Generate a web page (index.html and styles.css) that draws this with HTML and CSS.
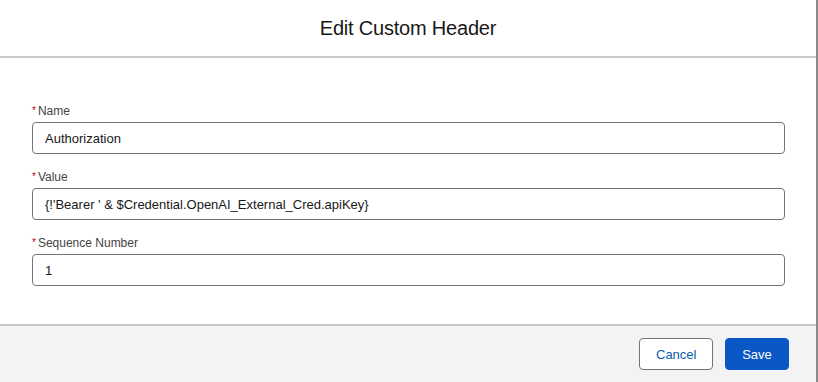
FILE: index.html
```html
<!DOCTYPE html>
<html lang="en">
<head>
    <meta charset="UTF-8">
    <meta name="viewport" content="width=device-width, initial-scale=1.0">
    <title>Edit Custom Header</title>
    <link rel="stylesheet" href="styles.css">
</head>
<body>
    <div class="modal">
        <div class="modal-header">
            <h2>Edit Custom Header</h2>
        </div>
        <div class="modal-body">
            <div class="form-group">
                <label for="name"><abbr>*</abbr>Name</label>
                <input type="text" id="name" value="Authorization">
            </div>
            <div class="form-group">
                <label for="value"><abbr>*</abbr>Value</label>
                <input type="text" id="value" value="{!'Bearer ' &amp; $Credential.OpenAI_External_Cred.apiKey}">
            </div>
            <div class="form-group">
                <label for="seq"><abbr>*</abbr>Sequence Number</label>
                <input type="text" id="seq" value="1">
            </div>
        </div>
        <div class="modal-footer">
            <button class="btn btn-neutral">Cancel</button>
            <button class="btn btn-brand">Save</button>
        </div>
    </div>
</body>
</html>
```

FILE: styles.css
```css
body {
    margin: 0;
    padding: 0;
    font-family: 'Liberation Sans', Arial, sans-serif;
    color: #181818;
    background: #fff;
}
.modal {
    width: 816px;
    height: 382px;
    border-right: 2px solid #8a8a8a;
    display: flex;
    flex-direction: column;
    background: #fff;
}
.modal-header {
    height: 58px;
    box-sizing: border-box;
    border-bottom: 2px solid #c9c9c9;
    display: flex;
    align-items: center;
    justify-content: center;
}
.modal-header h2 {
    margin: 0;
    font-size: 20px;
    font-weight: normal;
    letter-spacing: -0.2px;
}
.modal-body {
    flex: 1;
    padding: 46px 31px 0 32px;
}
.form-group {
    margin-bottom: 16px;
}
.form-group label {
    display: block;
    font-size: 12px;
    color: #444;
    margin-bottom: 4px;
    line-height: 14px;
}
.form-group abbr {
    color: #ba0517;
    margin-right: 2px;
    font-size: 10px;
    vertical-align: 1px;
}
.form-group input {
    width: 100%;
    height: 32px;
    box-sizing: border-box;
    border: 1px solid #747474;
    border-radius: 4px;
    padding: 0 12px;
    font-family: inherit;
    font-size: 13px;
    color: #181818;
    background: #fff;
}
.modal-footer {
    height: 58px;
    box-sizing: border-box;
    border-top: 2px solid #c9c9c9;
    background: #f3f3f3;
    display: flex;
    justify-content: flex-end;
    align-items: center;
    gap: 12px;
    padding: 0 27px 0 0;
}
.btn {
    height: 32px;
    padding: 0 16px;
    border-radius: 4px;
    font-family: inherit;
    font-size: 13px;
    cursor: pointer;
}
.btn-neutral {
    width: 74px;
    background: #fff;
    border: 1px solid #747474;
    color: #0b5cab;
}
.btn-brand {
    width: 64px;
    background: #0b57c6;
    border: 1px solid #0b57c6;
    color: #fff;
}
```
